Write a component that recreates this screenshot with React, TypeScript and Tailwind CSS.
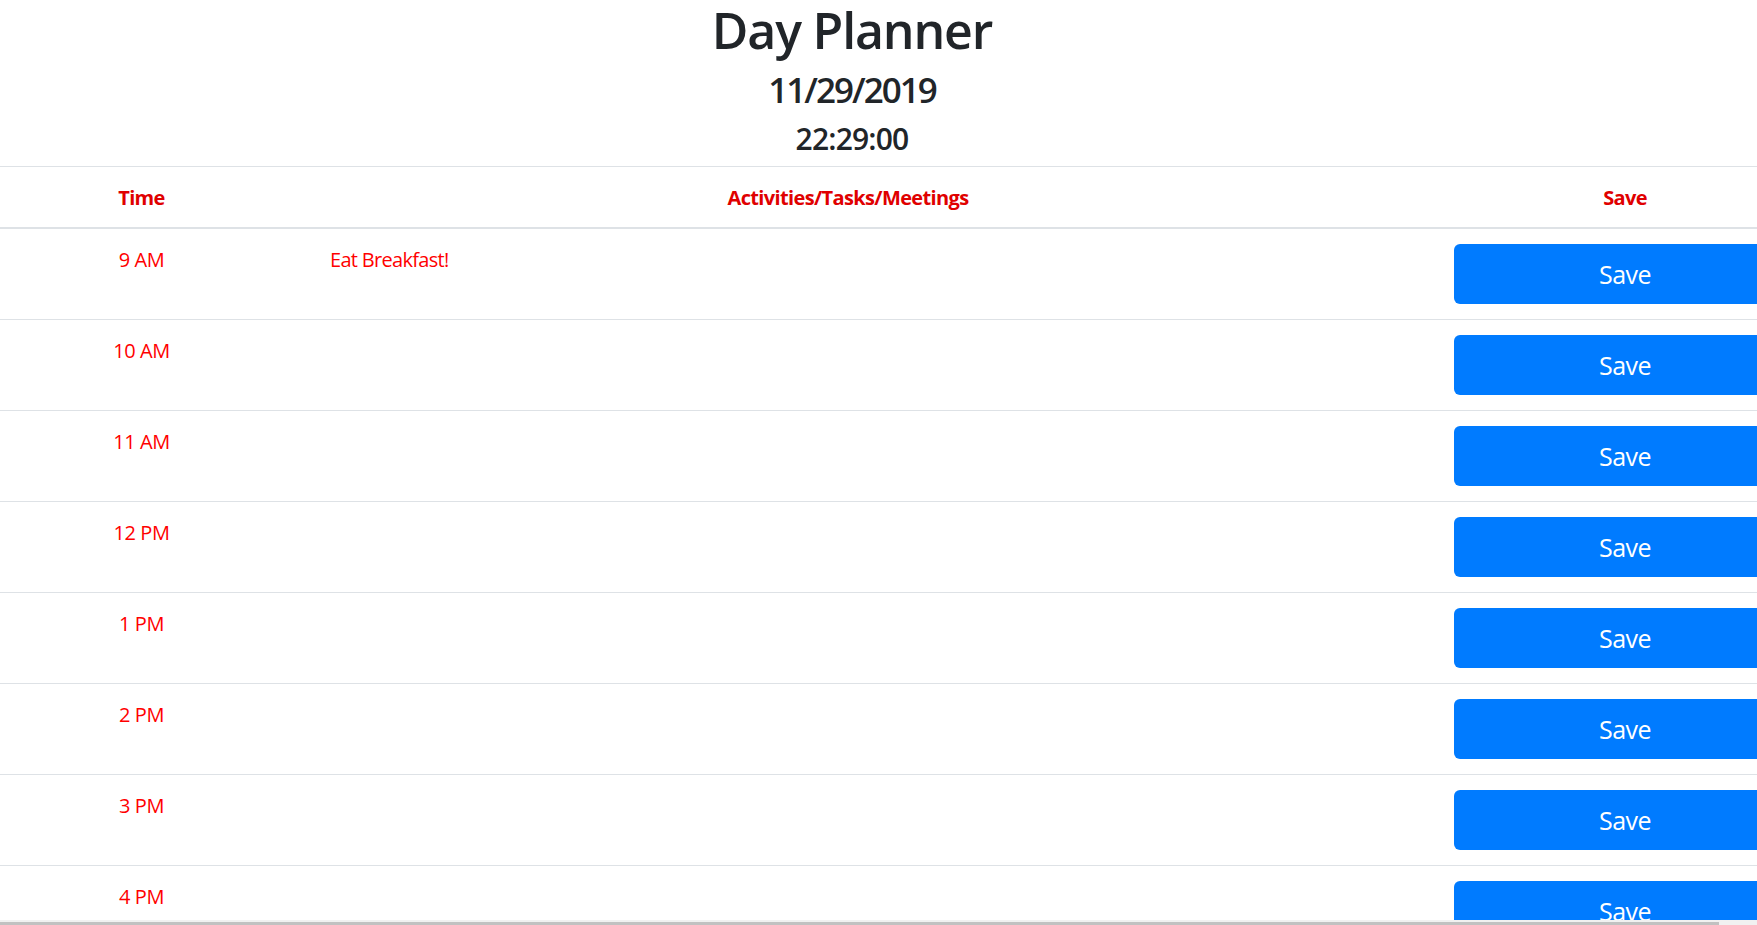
import React from "react";

const hours = ["9 AM", "10 AM", "11 AM", "12 PM", "1 PM", "2 PM", "3 PM", "4 PM", "5 PM"];

const tasks: Record<string, string> = {
  "9 AM": "Eat Breakfast!",
};

function HourRow({ hour }: { hour: string }) {
  return (
    <div className="grid grid-cols-[283px_1130px_383px] border-b border-[#dee2e6]">
      <div className="pt-[16px] pb-[14px] text-center text-[20px] leading-[30px] tracking-[-0.02em] text-[#f00]">
        {hour}
      </div>
      <div className="pt-[16px] pb-[14px] pl-[47px] text-[20px] leading-[30px] tracking-[-0.035em] text-[#f00]">
        {tasks[hour] ?? ""}
      </div>
      <div className="py-[15px] pl-[41px]">
        <button
          type="button"
          className="h-[60px] w-[342px] rounded-[6px] bg-[#007bff] text-[25px] leading-[37px] tracking-[-0.02em] text-white"
        >
          Save
        </button>
      </div>
    </div>
  );
}

export default function App() {
  return (
    <div
      className="relative h-screen w-full overflow-hidden bg-white text-[#212529]"
      style={{ fontFamily: '"Open Sans", "Noto Sans", sans-serif' }}
    >
      {/* Header */}
      <header className="w-[1704px] text-center">
        <h1 className="mb-[9px] text-[50px] leading-[60px] font-[550] tracking-[-0.023em]">Day Planner</h1>
        <h3 className="mb-[10px] text-[35px] leading-[42px] font-[550] tracking-[-0.057em]">11/29/2019</h3>
        <h4 className="mb-[9px] text-[30px] leading-[36px] font-[550] tracking-[-0.027em]">22:29:00</h4>
      </header>

      {/* Planner table */}
      <div className="w-[1796px] border-t border-[#dee2e6]">
        <div className="grid grid-cols-[283px_1130px_383px] border-b-2 border-[#dee2e6] text-[20px] leading-[30px] font-bold tracking-[-0.032em] text-[#e00000]">
          <div className="pt-[16px] pb-[14px] text-center">Time</div>
          <div className="pt-[16px] pb-[14px] text-center">Activities/Tasks/Meetings</div>
          <div className="pt-[16px] pb-[14px] pl-[41px]">
            <div className="w-[342px] text-center">Save</div>
          </div>
        </div>
        {hours.map((hour) => (
          <HourRow key={hour} hour={hour} />
        ))}
      </div>

      {/* horizontal scrollbar */}
      <div className="fixed bottom-0 left-0 h-[5px] w-full bg-[#f1f1f1]">
        <div className="mt-[2px] h-[3px] w-[1719px] bg-[#c1c1c1]" />
      </div>
    </div>
  );
}
